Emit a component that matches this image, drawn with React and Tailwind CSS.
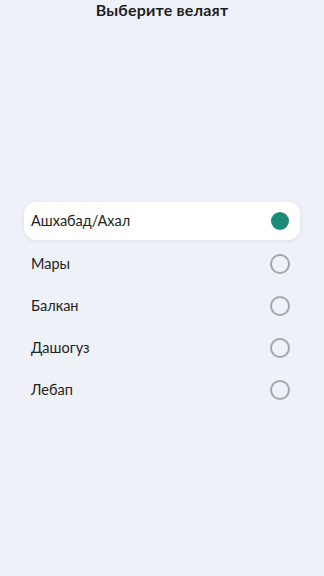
import React, { useState } from "react";

const items = ["Ашхабад/Ахал", "Мары", "Балкан", "Дашогуз", "Лебап"];

export default function App() {
  const [sel, setSel] = useState(0);
  return (
    <div
      className="min-h-[576px] w-full bg-[#eef2f8] text-[#1d1d1f]"
      style={{ fontFamily: "Lato, 'Open Sans', sans-serif" }}
    >
      <h1 className="text-center text-[16px] leading-[20px] font-bold tracking-[0.2px]">
        Выберите велаят
      </h1>
      <ul className="mt-[182px] flex flex-col gap-1 px-6">
        {items.map((name, i) => (
          <li
            key={name}
            onClick={() => setSel(i)}
            className={
              "flex h-[38px] items-center justify-between rounded-xl pl-[7px] pr-[10px] first:mb-px " +
              (i === sel ? "bg-white shadow-[0_1px_4px_rgba(0,0,0,0.08)]" : "")
            }
          >
            <span className="text-[14.5px] text-[#222]">{name}</span>
            {i === sel ? (
              <span className="flex h-5 w-5 items-center justify-center">
                <span className="h-[18px] w-[18px] rounded-full bg-[#1d8a78]" />
              </span>
            ) : (
              <span className="h-5 w-5 rounded-full border-2 border-[#a3a6ab]" />
            )}
          </li>
        ))}
      </ul>
    </div>
  );
}
